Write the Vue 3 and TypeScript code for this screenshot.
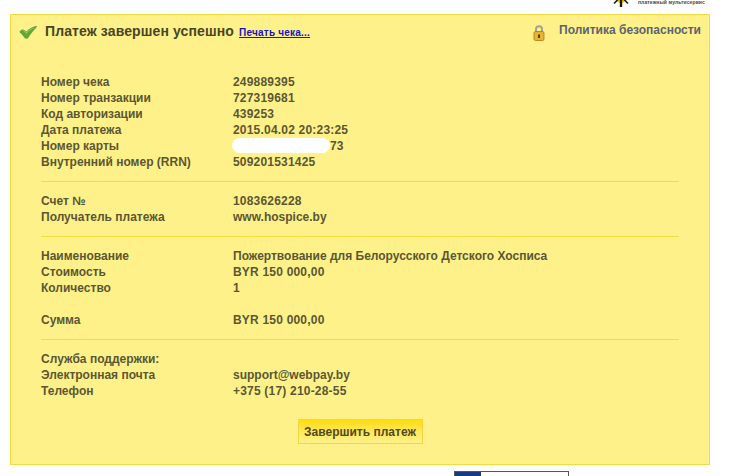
<script setup lang="ts">
interface Row { label: string; value: string; hidden?: boolean; num?: boolean }
const sections: Row[][] = [
  [
    { label: 'Номер чека', value: '249889395', num: true },
    { label: 'Номер транзакции', value: '727319681', num: true },
    { label: 'Код авторизации', value: '439253', num: true },
    { label: 'Дата платежа', value: '2015.04.02 20:23:25', num: true },
    { label: 'Номер карты', value: '73', hidden: true, num: true },
    { label: 'Внутренний номер (RRN)', value: '509201531425', num: true },
  ],
  [
    { label: 'Счет №', value: '1083626228', num: true },
    { label: 'Получатель платежа', value: 'www.hospice.by' },
  ],
  [
    { label: 'Наименование', value: 'Пожертвование для Белорусского Детского Хосписа' },
    { label: 'Стоимость', value: 'BYR 150 000,00', num: true },
    { label: 'Количество', value: '1' },
    { label: '\u00a0', value: '' },
    { label: 'Сумма', value: 'BYR 150 000,00', num: true },
  ],
  [
    { label: 'Служба поддержки:', value: '' },
    { label: 'Электронная почта', value: 'support@webpay.by' },
    { label: 'Телефон', value: '+375 (17) 210-28-55', num: true },
  ],
]
</script>

<template>
  <div class="page">
    <div class="top">
      <svg class="sun" width="18" height="8" viewBox="0 0 18 8">
        <path d="M2 0H7.5L8.5 3H9.5L10.5 0H16L9 5Z" fill="#f5c800" />
        <g stroke="#1c1a08" stroke-width="1.6">
          <path d="M6 0.5L2 4.5" />
          <path d="M12 0.5L16 4.5" />
        </g>
        <path d="M9 0V8" stroke="#1c1a08" stroke-width="2.4" />
      </svg>
      <span class="tagline">платежный мультисервис</span>
    </div>
    <main class="box">
      <header class="head">
        <div class="title-wrap">
          <svg class="check" width="18" height="14" viewBox="0 0 18 14">
            <path d="M0.3 7C1.8 4.6 3.6 4 5.2 5L7.4 6.6C10 3.8 13 1.8 17.7 0.8C17.9 2 17.6 2.6 16.8 3.2C13.8 6 11.4 9.4 9 13.2C8 14 6.4 14 5.6 13C4.2 10.8 2.6 9 0.3 7Z" fill="#62a834" />
            <path d="M1.8 6.8C3.4 5.2 4.6 5.6 7.4 8.4C10 5.6 12.6 3.8 16 2.4C12.6 3.2 10 4.8 7.4 7.2C5 5.2 3.4 4.8 1.8 6.8Z" fill="#a9d476" />
          </svg>
          <h1 class="title">Платеж завершен успешно</h1>
          <a class="print" href="#">Печать чека...</a>
        </div>
        <div class="policy">
          <svg class="lock" width="12" height="16" viewBox="0 0 12 16">
            <path d="M3 7V4.2a3 3 0 0 1 6 0V7" fill="none" stroke="#a3a394" stroke-width="2" />
            <rect x="1" y="6.5" width="10" height="9" rx="1.5" fill="#e8b52a" stroke="#a87a12" stroke-width=".8" />
            <rect x="5" y="9.5" width="2" height="3.5" fill="#4a3a0c" />
          </svg>
          <span>Политика безопасности</span>
        </div>
      </header>
      <div class="content">
        <section v-for="(section, i) in sections" :key="i" class="section">
          <div v-for="row in section" :key="row.label + row.value" class="row">
            <span class="label">{{ row.label }}</span>
            <span class="value" :class="{ masked: row.hidden, num: row.num }">
              <span v-if="row.hidden" class="mask"></span>{{ row.value }}
            </span>
          </div>
        </section>
      </div>
      <div class="actions">
        <button class="finish" type="button">Завершить платеж</button>
      </div>
    </main>
    <div class="bottom">
      <div class="badge"><span class="badge-blue"></span></div>
    </div>
  </div>
</template>

<style>
html, body { margin: 0; background: #fff; overflow: hidden; }
</style>

<style scoped>
.page {
  width: 731px;
  height: 476px;
  position: relative;
  overflow: hidden;
  font-family: "Liberation Sans", Arial, sans-serif;
  font-size: 12px;
  color: #5a5733;
}
.top {
  height: 14px;
  display: flex;
  align-items: flex-start;
  padding-left: 612px;
  box-sizing: border-box;
}
.sun { margin-top: -1px; }
.tagline {
  margin-left: 8px;
  font-size: 5px;
  line-height: 5px;
  font-weight: 700;
  color: #4a4a3a;
  letter-spacing: .1px;
  white-space: nowrap;
}
.box {
  margin-left: 10px;
  width: 700px;
  height: 451px;
  box-sizing: border-box;
  background: #fff18a;
  border: 1px solid #f2dc42;
}
.head {
  display: flex;
  justify-content: space-between;
  align-items: flex-start;
  height: 59px;
  padding: 7px 8px 0 8px;
  box-sizing: border-box;
}
.title-wrap {
  display: flex;
  align-items: baseline;
}
.check {
  align-self: flex-start;
  margin: 3px 8px 0 0;
}
.title {
  margin: 0;
  font-size: 14px;
  line-height: 18px;
  font-weight: 700;
  color: #474526;
  letter-spacing: .12px;
}
.print {
  margin-left: 5px;
  font-size: 10px;
  font-weight: 700;
  color: #1515c8;
  text-decoration: underline;
  letter-spacing: .22px;
}
.policy {
  display: flex;
  align-items: flex-start;
  font-size: 12px;
  line-height: 16px;
  font-weight: 700;
  color: #5a6470;
}
.lock { margin: 3px 14px 0 1px; }
.content {
  padding: 0 30px;
}
.section {
  padding: 0 0 11px;
  margin-bottom: 11px;
  border-bottom: 1px solid #f2dc42;
}
.section:last-child {
  border-bottom: 0;
  margin-bottom: 0;
}
.row {
  display: flex;
  height: 16px;
  line-height: 16px;
  font-weight: 700;
  white-space: nowrap;
}
.label { width: 192px; }
.value { position: relative; flex: 1; }
.num { letter-spacing: .2px; }
.masked { padding-left: 97px; }
.mask {
  position: absolute;
  left: -1px;
  top: 0;
  width: 98px;
  height: 15px;
  background: #fff;
  border-radius: 8px;
}
.actions {
  display: flex;
  justify-content: center;
  margin-top: 9px;
}
.finish {
  width: 125px;
  height: 25px;
  padding: 0;
  font-family: inherit;
  font-size: 12px;
  font-weight: 700;
  color: #4f4a1a;
  border: 1px solid #f0d83a;
  background: linear-gradient(#ffdc10, #ffe95a 50%, #fff18a);
}
.bottom {
  position: absolute;
  left: 454px;
  top: 471px;
}
.badge {
  width: 113px;
  height: 10px;
  background: #fff;
  border: 1px solid #555;
}
.badge-blue {
  display: block;
  width: 26px;
  height: 10px;
  background: #173a80;
}
</style>
